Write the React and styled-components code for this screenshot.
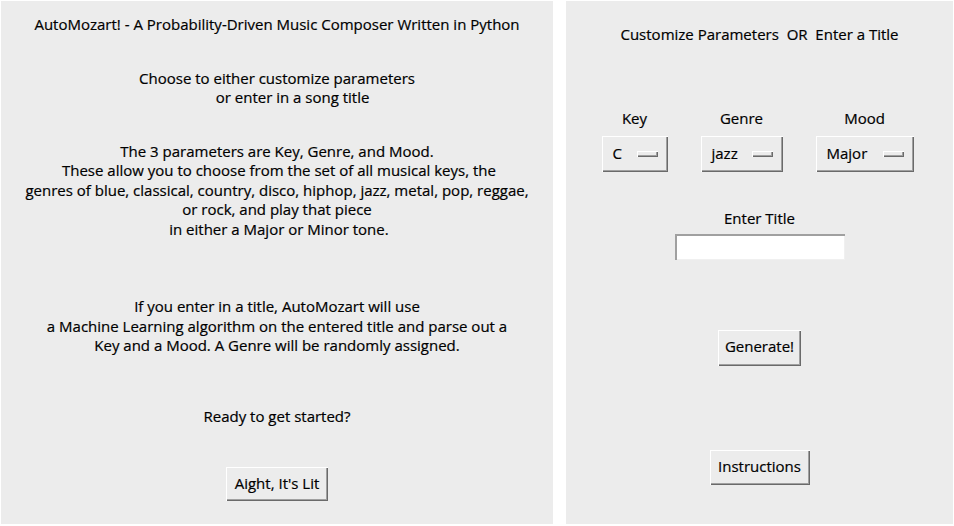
import React from 'react';
import styled, { createGlobalStyle } from 'styled-components';

const GlobalStyle = createGlobalStyle`
    html, body {
        margin: 0;
        padding: 0;
        background: #ffffff;
    }
    body {
        font-family: "Open Sans", "Noto Sans", sans-serif;
        font-size: 15px;
        color: #000;
        -webkit-text-stroke: 0.2px #000;
    }
`;

const Page = styled.div`
    display: flex;
    gap: 13px;
    padding: 1px 1px 2px 1px;
    width: 954px;
    height: 526px;
    box-sizing: border-box;
`;

const Window = styled.div`
    width: ${p => p.w}px;
    background: #ececec;
    display: flex;
    flex-direction: column;
    align-items: center;
    text-align: center;
    line-height: 19.5px;
    padding-top: ${p => p.top}px;
    box-sizing: border-box;
`;

const Text = styled.div`
    margin-top: ${p => p.mt || 0}px;
    white-space: pre;
`;

const Raised = styled.button`
    font: inherit;
    color: inherit;
    background: #ececec;
    border: none;
    box-shadow: inset 1px 1px #ffffff, inset -1px -1px #6a6a6a, inset -2px -2px #a0a0a0;
    padding: 0;
    cursor: pointer;
`;

const PushButton = styled(Raised)`
    margin-top: ${p => p.mt}px;
    width: ${p => p.w}px;
    height: ${p => p.h || 35}px;
    display: flex;
    align-items: center;
    justify-content: center;
    padding-bottom: 1px;
`;

const OptionRow = styled.div`
    display: flex;
    gap: 33px;
    margin-top: 64px;
    margin-left: -4px;
`;

const OptionCol = styled.div`
    display: flex;
    flex-direction: column;
    align-items: center;
    gap: 8px;
`;

const MenuButton = styled(Raised)`
    width: ${p => p.w}px;
    height: 36px;
    display: flex;
    align-items: center;
    justify-content: space-between;
    padding: 0 10px 1px 11px;
`;

const Indicator = styled.span`
    width: 21px;
    height: 6px;
    box-sizing: border-box;
    background: #ececec;
    box-shadow: inset 1px 1px #ffffff, inset -1px -1px #6a6a6a, inset -2px -2px #a0a0a0;
`;

const Entry = styled.input`
    margin-top: 5px;
    width: 170px;
    height: 26px;
    box-sizing: border-box;
    border: none;
    background: #fff;
    box-shadow: inset 2px 2px #a0a0a0, inset -1px -1px #f0f0f0;
    outline: none;
    font: inherit;
`;

const options = [
    { label: 'Key', value: 'C', w: 66 },
    { label: 'Genre', value: 'jazz', w: 82 },
    { label: 'Mood', value: 'Major', w: 98 },
];

export default function App() {
    return (
        <>
            <GlobalStyle />
            <Page>
                <Window w={552} top={14}>
                    <Text>AutoMozart! - A Probability-Driven Music Composer Written in Python</Text>
                    <Text mt={34}>{'Choose to either customize parameters\n        or enter in a song title'}</Text>
                    <Text mt={34}>
                        {'The 3 parameters are Key, Genre, and Mood.\n These allow you to choose from the set of all musical keys, the\ngenres of blue, classical, country, disco, hiphop, jazz, metal, pop, reggae,\nor rock, and play that piece\n in either a Major or Minor tone.'}
                    </Text>
                    <Text mt={58}>
                        {'If you enter in a title, AutoMozart will use\na Machine Learning algorithm on the entered title and parse out a\nKey and a Mood. A Genre will be randomly assigned.'}
                    </Text>
                    <Text mt={51}>Ready to get started?</Text>
                    <PushButton mt={41} w={102} h={34}>Aight, It's Lit</PushButton>
                </Window>
                <Window w={387} top={24}>
                    <Text>{'Customize Parameters  OR  Enter a Title'}</Text>
                    <OptionRow>
                        {options.map(o => (
                            <OptionCol key={o.label}>
                                <Text>{o.label}</Text>
                                <MenuButton w={o.w}>
                                    <span>{o.value}</span>
                                    <Indicator />
                                </MenuButton>
                            </OptionCol>
                        ))}
                    </OptionRow>
                    <Text mt={37}>Enter Title</Text>
                    <Entry type="text" />
                    <PushButton mt={70} w={83} h={36}>Generate!</PushButton>
                    <PushButton mt={84} w={100} h={35}>Instructions</PushButton>
                </Window>
            </Page>
        </>
    );
}
